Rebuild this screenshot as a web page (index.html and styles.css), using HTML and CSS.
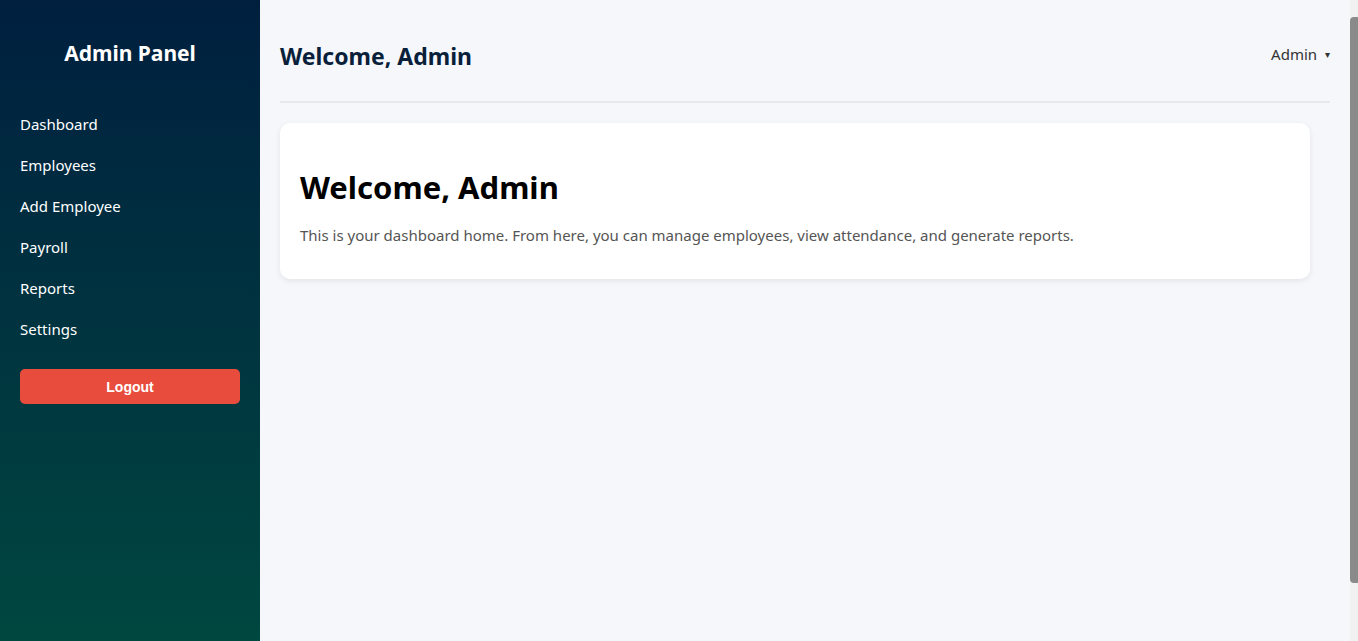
FILE: index.html
```html
<!DOCTYPE html>
<html lang="en">
<head>
<meta charset="utf-8">
<title>Admin Panel</title>
<link rel="stylesheet" href="styles.css">
</head>
<body>
<div class="layout">
  <aside class="sidebar">
    <h2 class="brand">Admin Panel</h2>
    <nav class="nav">
      <a href="#">Dashboard</a>
      <a href="#">Employees</a>
      <a href="#">Add Employee</a>
      <a href="#">Payroll</a>
      <a href="#">Reports</a>
      <a href="#">Settings</a>
    </nav>
    <button class="logout">Logout</button>
  </aside>
  <main class="main">
    <header class="topbar">
      <h2 class="page-title">Welcome, Admin</h2>
      <div class="user">Admin <span class="caret">&#9662;</span></div>
    </header>
    <section class="card">
      <h1>Welcome, Admin</h1>
      <p>This is your dashboard home. From here, you can manage employees, view attendance, and generate reports.</p>
    </section>
  </main>
  <div class="scrollbar"><div class="thumb"></div></div>
</div>
</body>
</html>
```
FILE: styles.css
```css
* { box-sizing: border-box; }
html, body { margin: 0; padding: 0; }
body {
  font-family: "Noto Sans", "Open Sans", "DejaVu Sans", sans-serif;
  background: #f5f7fb;
  color: #222;
}
.layout {
  display: flex;
  align-items: flex-start;
}
.sidebar {
  box-sizing: content-box;
  width: 220px;
  flex: 0 0 220px;
  height: 100vh;
  padding: 20px;
  background: linear-gradient(to bottom, #001f3f, #004a40);
  color: #fff;
  display: flex;
  flex-direction: column;
}
.brand {
  margin: 20px 0 38px;
  text-align: center;
  font-size: 21px;
  font-weight: 700;
  line-height: 26px;
}
.nav {
  display: flex;
  flex-direction: column;
}
.nav a {
  color: #fff;
  text-decoration: none;
  font-size: 15px;
  line-height: 21px;
  padding: 10px 0;
}
.logout {
  margin-top: 19px;
  height: 35px;
  border: none;
  border-radius: 5px;
  background: #e74c3c;
  color: #fff;
  font-family: "Liberation Sans", Arial, sans-serif;
  font-weight: 700;
  font-size: 14px;
}
.main {
  flex: 1;
  padding: 20px;
}
.topbar {
  display: flex;
  justify-content: space-between;
  align-items: center;
  border-bottom: 2px solid #e6e8ec;
  padding-bottom: 9px;
}
.page-title {
  margin: 20px 0;
  font-size: 23px;
  line-height: 32px;
  font-weight: 700;
  color: #0a1f3a;
}
.user {
  font-size: 15px;
  color: #333;
  margin-top: -4px;
}
.caret {
  font-size: 10px;
  margin-left: 4px;
  vertical-align: 2px;
}
.card {
  margin: 20px 20px 0 0;
  background: #fff;
  border-radius: 10px;
  padding: 20px;
  box-shadow: 0 2px 6px rgba(0,0,0,0.08);
}
.card h1 {
  margin: 23px 0 16px;
  font-size: 31px;
  line-height: 42px;
  font-weight: 700;
  color: #000;
}
.card p {
  margin: 0 0 13px;
  font-size: 15px;
  line-height: 22px;
  color: #555;
}
.scrollbar {
  flex: 0 0 8px;
  width: 8px;
  height: 100vh;
  position: sticky;
  top: 0;
  background: #f1f1f1;
  padding: 17px 0 58px;
  display: flex;
}
.thumb {
  flex: 1;
  background: #8a8a8a;
  border-radius: 4px 0 0 4px;
}
```
